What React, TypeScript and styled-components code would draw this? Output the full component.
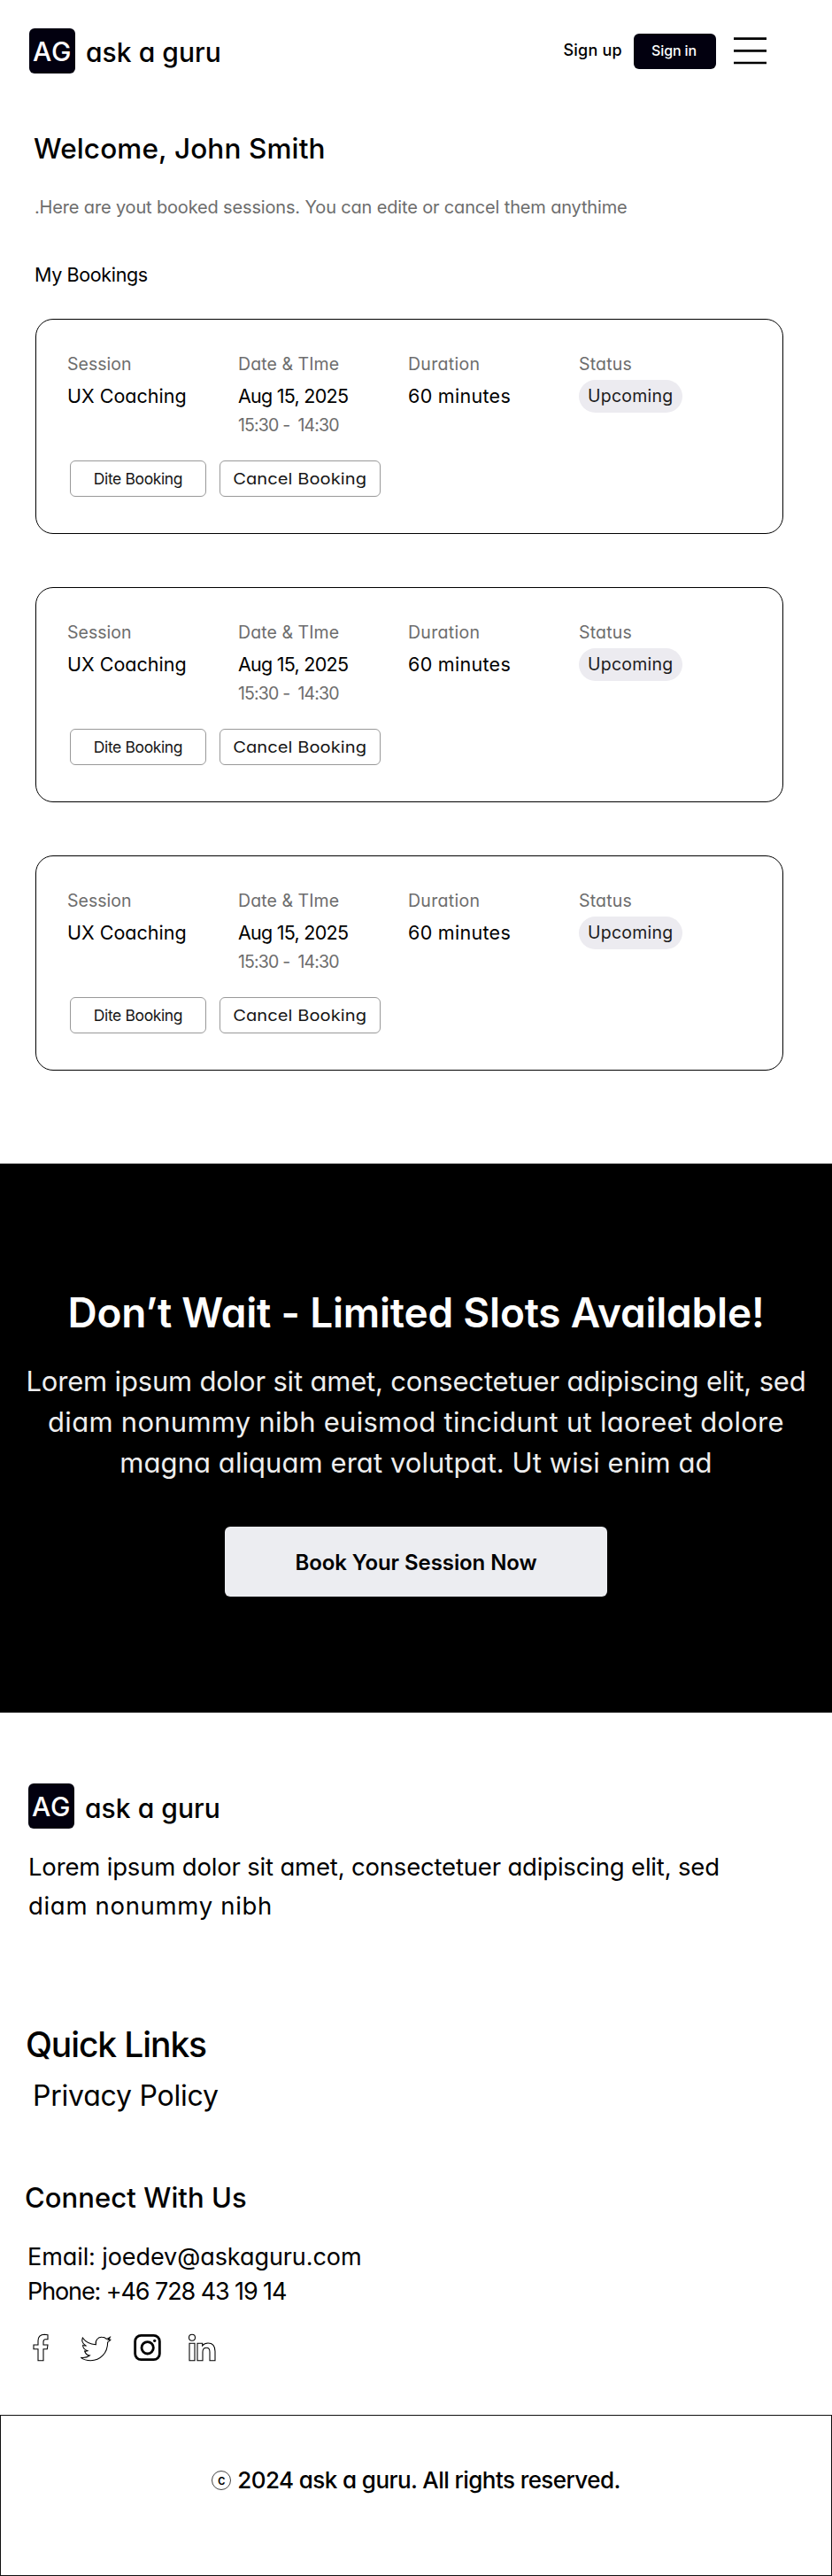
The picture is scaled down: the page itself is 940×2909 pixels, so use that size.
import React from "react";
import styled, { createGlobalStyle } from "styled-components";

const GlobalStyle = createGlobalStyle`
  *, *::before, *::after { box-sizing: border-box; }
  body {
    margin: 0;
    background: #fff;
    color: #000;
    font-family: Inter, "Liberation Sans", sans-serif;
    font-feature-settings: "cv11";
  }
  h1, h2, h3, p, dl, dt, dd { margin: 0; font-weight: inherit; }
  button { font: inherit; font-feature-settings: inherit; color: inherit; padding: 0; cursor: pointer; }
  a { color: inherit; text-decoration: none; }
`;

const Page = styled.div`
  width: 940px;
  overflow: hidden;
`;

/* Brand */

const Brand = styled.div`
  display: flex;
  align-items: center;
  gap: 12px;
`;

const BrandMark = styled.span`
  display: flex;
  align-items: center;
  width: 52px;
  height: 51px;
  padding-left: 4px;
  border-radius: 6px;
  background: #02000f;
  color: #fff;
  font-size: 30px;
  font-weight: 500;
  letter-spacing: 0.8px;
`;

const BrandName = styled.span<{ $drop: number }>`
  padding-top: ${(p) => p.$drop}px;
  font-size: 30px;
  font-weight: 500;
  line-height: 36px;
  letter-spacing: 0.05px;
`;

/* Header */

const Header = styled.header`
  display: flex;
  justify-content: space-between;
  height: 108px;
  padding: 32px 74px 25px 33px;
`;

const HeaderNav = styled.nav`
  display: flex;
  align-items: center;
  height: 51px;
`;

const SignUp = styled.a`
  margin-right: 13px;
  padding-bottom: 2px;
  font-size: 18px;
  font-weight: 500;
  letter-spacing: 0.24px;
`;

const SignIn = styled.button`
  width: 93px;
  height: 40px;
  margin-right: 20px;
  padding: 0 2px 2px 0;
  border: 0;
  border-radius: 6px;
  background: #02000f;
  color: #fff;
  font-size: 16px;
  font-weight: 500;
  letter-spacing: -0.15px;
`;

const MenuIcon = styled.svg`
  display: block;
  width: 37px;
  height: 31px;
`;

/* Bookings */

const Main = styled.main`
  padding: 40px 55px 0 40px;
`;

const Welcome = styled.h1`
  margin-left: -2px;
  font-size: 31.5px;
  font-weight: 500;
  line-height: 40px;
  letter-spacing: 0.13px;
`;

const Intro = styled.p`
  margin: 31px 0 0 -1px;
  color: #6d6d6d;
  font-size: 20px;
  line-height: 30px;
  letter-spacing: -0.16px;
  white-space: nowrap;
`;

const SectionTitle = styled.h2`
  margin: 46px 0 35px -1px;
  font-size: 21.5px;
  line-height: 30px;
  letter-spacing: -0.36px;
`;

const BookingList = styled.div`
  display: flex;
  flex-direction: column;
  gap: 60px;
`;

const Card = styled.article`
  height: 243px;
  padding: 35px 34px 0;
  border: 1px solid #000;
  border-radius: 20px;
`;

const Details = styled.dl`
  display: grid;
  grid-template-columns: 193px 192px 193px auto;
  height: 98px;
  padding-left: 1px;
`;

const Label = styled.dt<{ $tracking?: number }>`
  color: #6d6d6d;
  font-size: 19.5px;
  line-height: 30px;
  letter-spacing: ${(p) => p.$tracking ?? 0}px;
  white-space: nowrap;
`;

const Value = styled.dd<{ $tracking?: number }>`
  margin-top: 3px;
  font-size: 21.5px;
  line-height: 37px;
  letter-spacing: ${(p) => p.$tracking ?? 0}px;
  white-space: nowrap;
`;

const Time = styled.dd`
  color: #6d6d6d;
  font-size: 19.5px;
  line-height: 28px;
  letter-spacing: -0.85px;
  white-space: pre;
`;

const Badge = styled.dd`
  width: 117px;
  height: 37px;
  margin-top: 3px;
  padding-left: 10px;
  border-radius: 19px;
  background: #ecebf0;
  color: #1c1c1c;
  font-size: 19.5px;
  line-height: 36px;
  letter-spacing: 0.25px;
`;

const Actions = styled.div`
  display: flex;
  gap: 15px;
  margin: 26px 0 0 4px;
`;

const ActionButton = styled.button<{ $width: number; $tracking: number }>`
  width: ${(p) => p.$width}px;
  height: 41px;
  border: 1px solid #999;
  border-radius: 6px;
  background: #fff;
  color: #161616;
  font-size: 17.5px;
  letter-spacing: ${(p) => p.$tracking}px;
`;

const Widened = styled.span`
  display: inline-block;
  transform: scaleX(1.15);
`;

/* Call to action */

const Promo = styled.section`
  display: flex;
  flex-direction: column;
  align-items: center;
  height: 620px;
  margin-top: 105px;
  padding-top: 138px;
  background: #000;
  color: #fff;
  text-align: center;
  white-space: nowrap;
`;

const PromoTitle = styled.h2`
  font-size: 46px;
  font-weight: 600;
  line-height: 60px;
  letter-spacing: -0.2px;
`;

const PromoText = styled.p`
  margin-top: 25px;
  color: #eee;
  font-size: 31px;
  line-height: 46px;
`;

const PromoLine = styled.span<{ $tracking: number }>`
  display: block;
  letter-spacing: ${(p) => p.$tracking}px;
`;

const PromoButton = styled.button`
  width: 432px;
  height: 79px;
  margin-top: 49px;
  padding-top: 2px;
  border: 0;
  border-radius: 6px;
  background: #ecedf1;
  color: #000;
  font-size: 24px;
  font-weight: 600;
  letter-spacing: -0.08px;
`;

/* Footer */

const Footer = styled.footer`
  padding: 80px 32px 0;
  white-space: nowrap;
`;

const About = styled.p`
  margin-top: 21px;
  font-size: 27.5px;
  line-height: 44px;
`;

const AboutLine = styled.span<{ $tracking: number }>`
  display: block;
  letter-spacing: ${(p) => p.$tracking}px;
`;

const LinksTitle = styled.h2`
  margin: 110px 0 0 -3px;
  font-size: 39px;
  font-weight: 500;
  line-height: 50px;
  letter-spacing: -1.1px;
`;

const FooterLink = styled.a`
  display: block;
  margin: 11px 0 0 5px;
  font-size: 32px;
  line-height: 44px;
  letter-spacing: -0.23px;
`;

const ConnectTitle = styled.h3`
  margin: 73px 0 27px -4px;
  font-size: 31px;
  font-weight: 500;
  line-height: 40px;
  letter-spacing: 0.07px;
`;

const Contact = styled.p<{ $tracking: number }>`
  margin-left: -1px;
  font-size: 27px;
  line-height: 39px;
  letter-spacing: ${(p) => p.$tracking}px;
`;

const Socials = styled.div`
  display: grid;
  grid-template-columns: 53px 60px 62px auto;
  height: 32px;
  margin: 28px 0 60px 5px;
`;

const SocialIcon = styled.svg`
  display: block;
  height: 32px;
  fill: none;
  stroke: #000;
  stroke-width: 3.2;
`;

const Legal = styled.div`
  display: flex;
  justify-content: center;
  height: 182px;
  padding-top: 57px;
  border: 1px solid #111;
  font-size: 26px;
  font-weight: 500;
  line-height: 32px;
  letter-spacing: -0.58px;
`;

const CopyrightSign = styled.span`
  display: flex;
  align-items: center;
  justify-content: center;
  width: 22px;
  height: 22px;
  margin: 5px 7px 0 0;
  padding-bottom: 2px;
  border: 1px solid #444;
  border-radius: 50%;
  font-size: 15px;
  line-height: 15px;
  letter-spacing: 0;
`;

const bookings = [1, 2, 3];

function Logo({ drop }: { drop: number }) {
  return (
    <Brand>
      <BrandMark>AG</BrandMark>
      <BrandName $drop={drop}>ask a guru</BrandName>
    </Brand>
  );
}

function BookingCard() {
  return (
    <Card>
      <Details>
        <div>
          <Label>Session</Label>
          <Value>UX Coaching</Value>
        </div>
        <div>
          <Label $tracking={0.07}>Date &amp; TIme</Label>
          <Value $tracking={-0.74}>Aug 15, 2025</Value>
          <Time>{"15:30 -  14:30"}</Time>
        </div>
        <div>
          <Label $tracking={0.3}>Duration</Label>
          <Value $tracking={0.3}>60 minutes</Value>
        </div>
        <div>
          <Label $tracking={0.19}>Status</Label>
          <Badge>Upcoming</Badge>
        </div>
      </Details>
      <Actions>
        <ActionButton $width={154} $tracking={-0.38}>Dite Booking</ActionButton>
        <ActionButton $width={182} $tracking={0.05}>
          <Widened>Cancel Booking</Widened>
        </ActionButton>
      </Actions>
    </Card>
  );
}

export default function App() {
  return (
    <Page>
      <GlobalStyle />
      <Header>
        <Logo drop={2} />
        <HeaderNav>
          <SignUp href="#">Sign up</SignUp>
          <SignIn>Sign in</SignIn>
          <MenuIcon viewBox="0 0 37 31" stroke="#000" strokeWidth="2.7">
            <path d="M0 1.7H37M0 15.4H37M0 29H37" />
          </MenuIcon>
        </HeaderNav>
      </Header>

      <Main>
        <Welcome>Welcome, John Smith</Welcome>
        <Intro>.Here are yout booked sessions. You can edite or cancel them anythime</Intro>
        <SectionTitle>My Bookings</SectionTitle>
        <BookingList>
          {bookings.map((id) => (
            <BookingCard key={id} />
          ))}
        </BookingList>
      </Main>

      <Promo>
        <PromoTitle>Don’t Wait - Limited Slots Available!</PromoTitle>
        <PromoText>
          <PromoLine $tracking={-0.19}>Lorem ipsum dolor sit amet, consectetuer adipiscing elit, sed</PromoLine>
          <PromoLine $tracking={0.27}>diam nonummy nibh euismod tincidunt ut laoreet dolore</PromoLine>
          <PromoLine $tracking={0.06}>magna aliquam erat volutpat. Ut wisi enim ad</PromoLine>
        </PromoText>
        <PromoButton>Book Your Session Now</PromoButton>
      </Promo>

      <Footer>
        <Logo drop={5} />
        <About>
          <AboutLine $tracking={-0.18}>Lorem ipsum dolor sit amet, consectetuer adipiscing elit, sed</AboutLine>
          <AboutLine $tracking={0.68}>diam nonummy nibh</AboutLine>
        </About>
        <LinksTitle>Quick Links</LinksTitle>
        <FooterLink href="#">Privacy Policy</FooterLink>
        <ConnectTitle>Connect With Us</ConnectTitle>
        <Contact $tracking={-0.08}>Email: joedev@askaguru.com</Contact>
        <Contact $tracking={-1.1}>Phone: +46 728 43 19 14</Contact>
        <Socials>
          <SocialIcon viewBox="20 27 54 96" width="18">
            <path d="M38 119H56V80H69L71 66H56V56Q56 47 63 47H71V32Q65 31 60 31Q38 32 38 52V66H23V80H38Z" />
          </SocialIcon>
          <SocialIcon viewBox="180 27 108 96" width="36">
            <path d="M190 42C200 56 216 64 235 65C232 50 243 39 256 40C262 40 267 42 271 46Q278 44 283 40Q281 46 276 49Q281 50 286 48Q281 54 275 57C275 94 250 119 217 119C204 119 192 115 184 109C196 111 206 108 214 102C205 101 199 95 197 87Q202 88 207 86C196 82 190 76 191 67Q196 70 201 69C190 62 186 53 190 42Z" />
          </SocialIcon>
          <SocialIcon viewBox="360 27 99 96" width="33">
            <g strokeWidth="8.5">
              <rect x="368" y="34" width="83" height="82" rx="20" />
              <circle cx="410" cy="76" r="20" />
            </g>
            <circle cx="434" cy="52" r="5" fill="#000" stroke="none" />
          </SocialIcon>
          <SocialIcon viewBox="545 27 99 96" width="33">
            <circle cx="560" cy="41" r="10.5" />
            <path d="M551 61H569V119H551ZM578 61H595V69Q602 60 614 60C632 60 638 71 638 88V119H620V90C620 81 618 76 609 76C600 76 596 82 596 90V119H578Z" />
          </SocialIcon>
        </Socials>
      </Footer>
      <Legal>
        <CopyrightSign>c</CopyrightSign>
        <span>2024 ask a guru. All rights reserved.</span>
      </Legal>
    </Page>
  );
}
